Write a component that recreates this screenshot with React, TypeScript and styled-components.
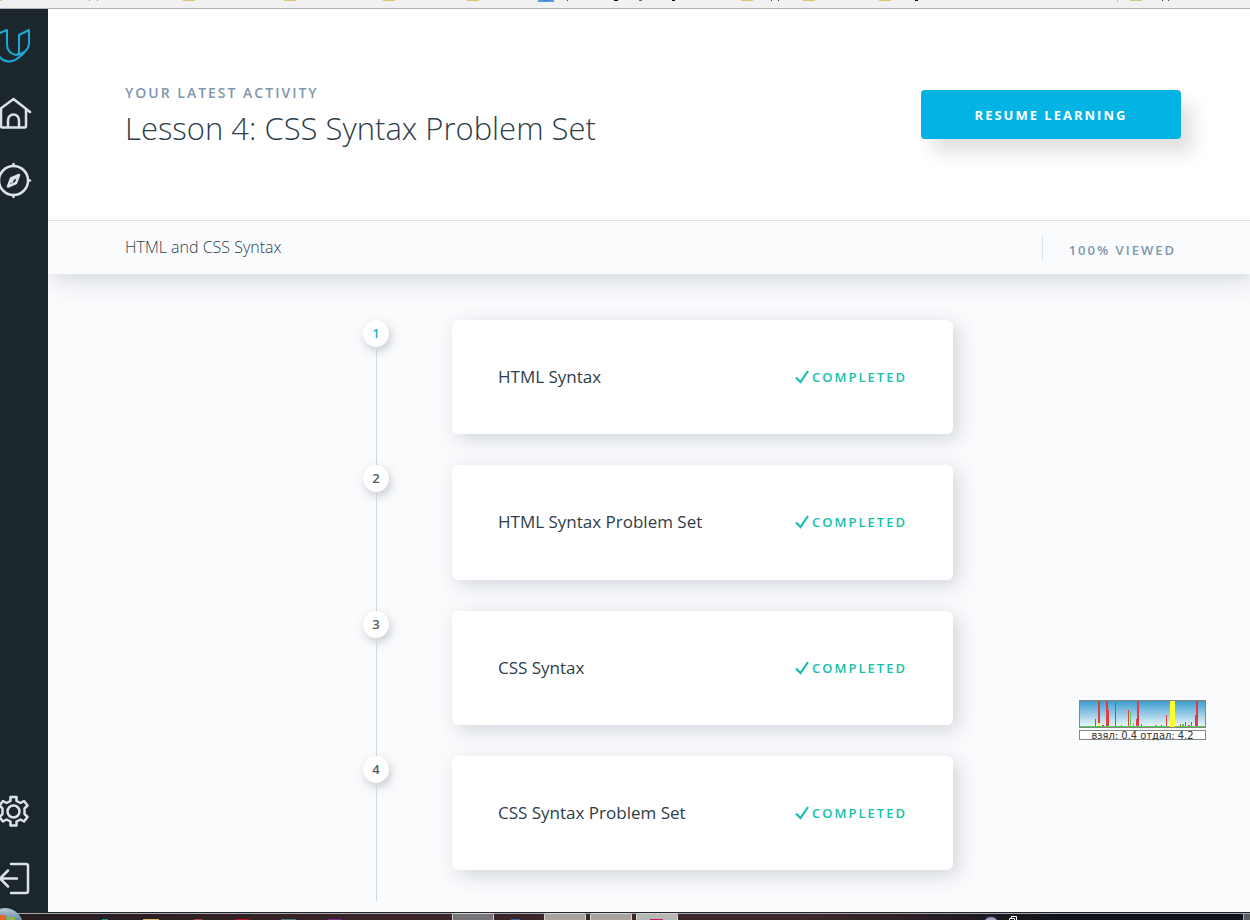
import React from "react";
import styled, { createGlobalStyle } from "styled-components";

const GlobalStyle = createGlobalStyle`
  *, *::before, *::after { box-sizing: border-box; }
  body {
    margin: 0;
    background: #fafbfd;
    color: #2e3d49;
    font-family: "Open Sans", "Noto Sans", sans-serif;
  }
  h1, h2, p, ol { margin: 0; padding: 0; }
`;

const Screen = styled.div`
  position: relative;
  display: flex;
  flex-direction: column;
  min-height: 100vh;
  overflow: hidden;
`;

const BookmarkBar = styled.div`
  height: 9px;
  overflow: hidden;
  background: #f1f1f1;
  border-bottom: 1px solid #b3b3b3;
  svg { display: block; }
`;

const Workspace = styled.div`
  display: flex;
  flex: 1;
`;

const Sidebar = styled.nav`
  position: relative;
  z-index: 1;
  display: flex;
  flex-direction: column;
  justify-content: space-between;
  flex: 0 0 48px;
  padding: 19px 0 15px;
  background: #1c262d;
`;

const NavGroup = styled.div`
  display: flex;
  flex-direction: column;
  gap: 31px;
`;

const NavLink = styled.a`
  display: block;
  height: 36px;
  color: #dbe2e8;
  svg { display: block; }
`;

const Main = styled.main`
  display: flex;
  flex-direction: column;
  flex: 1;
  min-width: 0;
`;

const Hero = styled.header`
  position: relative;
  z-index: 1;
  display: flex;
  align-items: flex-start;
  justify-content: space-between;
  height: 211px;
  padding: 73px 69px 0 77px;
  background: #fff;
`;

const Eyebrow = styled.p`
  color: #7d97ad;
  font-size: 14px;
  font-weight: 600;
  line-height: 22px;
  letter-spacing: 2px;
`;

const Title = styled.h1`
  font-size: 31px;
  font-weight: 300;
  line-height: 48px;
`;

const ResumeButton = styled.button`
  width: 260px;
  height: 49px;
  margin-top: 8px;
  border: 0;
  border-radius: 4px;
  background: #02b3e4;
  box-shadow: 12px 14px 18px rgba(0, 0, 0, 0.12);
  color: #fff;
  font: 700 13px/20px "Open Sans", sans-serif;
  letter-spacing: 2px;
`;

const SectionBar = styled.div`
  display: flex;
  align-items: center;
  justify-content: space-between;
  height: 54px;
  padding: 0 74px 0 77px;
  border-top: 1px solid #dbe0e6;
  background: #fafbfd;
  box-shadow: 5px 5px 25px rgba(46, 61, 73, 0.2);
`;

const SectionTitle = styled.h2`
  padding-bottom: 2px;
  font-size: 16px;
  font-weight: 300;
  line-height: 24px;
`;

const Viewed = styled.p`
  padding: 4px 0 0 26px;
  border-left: 1px solid #dbe2e8;
  color: #7d97ad;
  font-size: 13px;
  font-weight: 600;
  line-height: 22px;
  letter-spacing: 2px;
`;

const Timeline = styled.ol`
  display: grid;
  grid-auto-rows: 1fr;
  flex: 1;
  width: 100%;
  max-width: 608px;
  margin: 46px auto 11px;
  padding-left: 18px;
  list-style: none;
`;

const Step = styled.li`
  display: grid;
  grid-template-columns: 26px 1fr;
  column-gap: 63px;
`;

const Rail = styled.div`
  display: flex;
  flex-direction: column;
  align-items: center;
  &::after {
    content: "";
    flex: 1;
    width: 1px;
    background: #d3d8dc;
  }
`;

const StepNumber = styled.span<{ $active: boolean }>`
  width: 26px;
  height: 27px;
  border-radius: 50%;
  background: #fff;
  box-shadow: 2px 4px 10px rgba(46, 61, 73, 0.25);
  color: ${(p) => (p.$active ? "#2aaed3" : "#525c65")};
  font-size: 13px;
  font-weight: 600;
  line-height: 27px;
  text-align: center;
`;

const Card = styled.article`
  display: flex;
  align-items: center;
  justify-content: space-between;
  min-height: 80px;
  margin-bottom: 31px;
  padding: 0 46px;
  border-radius: 6px;
  background: #fff;
  box-shadow: 5px 5px 20px rgba(46, 61, 73, 0.2);
`;

const CardTitle = styled.h2`
  font-size: 17px;
  font-weight: 400;
  line-height: 24px;
`;

const Status = styled.p`
  display: flex;
  align-items: center;
  gap: 3px;
  color: #15c0ac;
  font-size: 13px;
  font-weight: 600;
  line-height: 20px;
  letter-spacing: 2px;
`;

const Monitor = styled.aside`
  position: absolute;
  top: 700px;
  right: 44px;
  width: 127px;
  svg { display: block; }
`;

const MonitorLabel = styled.p`
  height: 10px;
  margin-top: 2px;
  border: 1px solid #858585;
  background: #fff;
  color: #333;
  font: 11px/9px "DejaVu Sans Condensed", "DejaVu Sans", sans-serif;
  text-align: center;
  white-space: nowrap;
`;

const Taskbar = styled.footer`
  height: 8px;
  overflow: hidden;
  border-top: 1px solid #20242d;
  background: linear-gradient(#a5a5a9 0 1px, transparent 1px),
    linear-gradient(90deg, #241c20, #3b2529 30%, #3c282b 65%, #11131a 85%);
  svg { display: block; }
`;

const StartOrb = styled.button`
  position: absolute;
  z-index: 2;
  left: 0;
  bottom: 0;
  width: 24px;
  height: 12px;
  padding: 0;
  border: 0;
  background: none;
  svg { display: block; }
`;

const folders = [183, 284, 383, 467, 741, 803, 879, 1130];
const letterTails = [567, 771, 778, 1162, 1168];

const Bookmarks = () => (
  <svg width="1250" height="8" aria-hidden="true">
    {folders.map((x) => (
      <rect key={x} x={x} width="12" height="1" fill="#dcc66c" />
    ))}
    <rect width="2" height="1" fill="#dcc66c" />
    <rect x="538" width="16" height="2" fill="#5c98e2" />
    <rect x="543" width="7" height="1" fill="#3f84dc" />
    {letterTails.map((x) => (
      <rect key={x} x={x} width="1" height="1" fill="#444" />
    ))}
    <path d="M89 0h1v1h-1zM97 0h1v1h-1z" fill="#999" />
    <path d="M614 0h4v1h-4zM672 0h3v1h-3zM915 0h3v1h-3z" fill="#111" />
    <rect x="639" width="3" height="1" fill="#3583b0" />
    <rect x="1117" width="1" height="2" fill="#bbb" />
  </svg>
);

const iconProps = {
  width: 34,
  height: 36,
  fill: "none",
  stroke: "currentColor",
  strokeWidth: 2.5,
  strokeLinejoin: "round" as const,
  strokeLinecap: "round" as const,
  "aria-hidden": true,
};

const LogoIcon = () => (
  <svg {...iconProps} stroke="#1cabd9" strokeWidth="2">
    <path d="M-3 6L7 2v14c0 7 4 10 9 11 7-1 13-5 13-12V2l-10 5v17c0 2-1 3-3 3M-3 6v15c0 9 8 14 15 12 5-1 8-5 12-8" />
  </svg>
);

const HomeIcon = () => (
  <svg {...iconProps}>
    <path d="M-4 17L13.500 4 30 17M1 14v17a1.500 1.500 0 0 0 1.500 1.500h22A1.500 1.500 0 0 0 26 31V14M8 32V25a5.500 5.500 0 0 1 11 0v7" />
  </svg>
);

const CompassIcon = () => (
  <svg {...iconProps}>
    <circle cx="13.500" cy="18.500" r="14.500" />
    <path d="M13.500 4V2M13.500 33v2M28.500 18.500h1.500" />
    <path d="M19 13L16 21l-8 3.500 3-8z" />
    <path d="M17.500 14.500L13 17l-1.500 3" />
  </svg>
);

const GearIcon = () => (
  <svg {...iconProps}>
    <path d="M10.500 7V3h6V7l4 2 3.500-2 3.500 4.500-3 3v5.500l3 3-3.500 4.500-3.500-2-4 2v4h-6v-4l-4-2-3.500 2-3.500-4.500 3-3v-5.500l-3-3L3 7l3.500 2z" />
    <circle cx="13.500" cy="17.500" r="6" />
  </svg>
);

const ExitIcon = () => (
  <svg {...iconProps}>
    <path d="M11 3H26a2 2 0 0 1 2 2v25a2 2 0 0 1-2 2H11M17 17.500H0M8 9.500L0 17.500l8 8" />
  </svg>
);

const CheckIcon = () => (
  <svg width="14" height="14" viewBox="0 0 14 14" fill="none" stroke="currentColor" strokeWidth="2.200" aria-hidden="true">
    <path d="M1 7.500L5.500 12 13 1" />
  </svg>
);

const NetworkGraph = () => (
  <svg width="127" height="28" aria-hidden="true">
    <defs>
      <linearGradient id="graph-sky" x1="0" y1="0" x2="0" y2="1">
        <stop offset="0" stopColor="#3a9bce" />
        <stop offset="1" stopColor="#f4fafd" />
      </linearGradient>
    </defs>
    <rect x=".5" y=".5" width="126" height="27" fill="url(#graph-sky)" stroke="#858585" />
    <path
      d="M16 19h1v8h-1zM19 1h2v26h-2zM27 1h2v26h-2zM29 10h1v17h-1zM36 2h1v25h-1zM49 10h1v17h-1zM58 1h2v26h-2zM57 19h1v8h-1zM87 15h1v12h-1zM117 1h2v26h-2zM116 15h1v12h-1zM23 25h2v2h-2zM42 25h1v2h-1zM62 24h1v3h-1zM82 25h1v2h-1zM101 24h1v3h-1zM106 22h1v5h-1zM112 22h1v5h-1zM109 25h2v2h-2z"
      fill="#e13b42"
    />
    <path d="M1 26h125v1H1zM51 12h1v14h-1zM54 23h1v3h-1zM76 25h2v1h-2zM103 24h2v2h-2z" fill="#50cf50" />
    <path d="M91 1h5v26h-5zM19 23h2v3h-2z" fill="#ffff2d" />
  </svg>
);

const TaskbarItems = () => (
  <svg width="1250" height="7" aria-hidden="true">
    {[452, 544, 590, 636].map((x) => (
      <rect key={x} x={x + 0.5} y=".5" width="41" height="9" rx="1" fill={x === 636 ? "#b5b8b2" : x === 452 ? "#77747a" : "#a9a39f"} stroke="#d5d3d1" />
    ))}
    <path d="M102 6h6v1h-6z" fill="#209b83" />
    <path d="M143 6h16v1h-16z" fill="#d8bd6d" />
    <path d="M194 6h8v1h-8z" fill="#a94a3a" />
    <path d="M236 6h13v1h-13z" fill="#bd1020" />
    <path d="M281 6h15v1h-15z" fill="#517c80" />
    <path d="M328 6h13v1h-13z" fill="#7a27a2" />
    <path d="M511 6h9v1h-9z" fill="#2469a5" />
    <path d="M650 6h13v1h-13z" fill="#d31762" />
    <ellipse cx="991" cy="8" rx="6" ry="4" fill="#a0a2c2" stroke="#55566b" />
    <path d="M1011.500 5V3.500h5v4M1009.500 7V5.500h5V7" fill="none" stroke="#fff" />
    <path d="M1244 1h6v6h-6z" fill="#5b5d62" />
    <path d="M1243.500 1v6" stroke="#aaa" />
  </svg>
);

const steps = ["HTML Syntax", "HTML Syntax Problem Set", "CSS Syntax", "CSS Syntax Problem Set"];

export default function App() {
  return (
    <Screen>
      <GlobalStyle />
      <BookmarkBar>
        <Bookmarks />
      </BookmarkBar>
      <Workspace>
        <Sidebar>
          <NavGroup>
            <NavLink href="#" aria-label="Udacity"><LogoIcon /></NavLink>
            <NavLink href="#" aria-label="Home"><HomeIcon /></NavLink>
            <NavLink href="#" aria-label="Discover"><CompassIcon /></NavLink>
          </NavGroup>
          <NavGroup>
            <NavLink href="#" aria-label="Settings"><GearIcon /></NavLink>
            <NavLink href="#" aria-label="Sign out"><ExitIcon /></NavLink>
          </NavGroup>
        </Sidebar>
        <Main>
          <Hero>
            <div>
              <Eyebrow>YOUR LATEST ACTIVITY</Eyebrow>
              <Title>Lesson 4: CSS Syntax Problem Set</Title>
            </div>
            <ResumeButton type="button">RESUME LEARNING</ResumeButton>
          </Hero>
          <SectionBar>
            <SectionTitle>HTML and CSS Syntax</SectionTitle>
            <Viewed>100% VIEWED</Viewed>
          </SectionBar>
          <Timeline>
            {steps.map((title, i) => (
              <Step key={title}>
                <Rail>
                  <StepNumber $active={i === 0}>{i + 1}</StepNumber>
                </Rail>
                <Card>
                  <CardTitle>{title}</CardTitle>
                  <Status>
                    <CheckIcon />
                    COMPLETED
                  </Status>
                </Card>
              </Step>
            ))}
          </Timeline>
        </Main>
      </Workspace>
      <Monitor>
        <NetworkGraph />
        <MonitorLabel>взял: 0.4 отдал: 4.2</MonitorLabel>
      </Monitor>
      <Taskbar>
        <TaskbarItems />
      </Taskbar>
      <StartOrb type="button" aria-label="Start">
        <svg width="24" height="12" aria-hidden="true">
          <defs>
            <linearGradient id="orb" x1="0" y1="0" x2="0" y2="1">
              <stop offset="0" stopColor="#b9cad7" />
              <stop offset=".4" stopColor="#527f9f" />
            </linearGradient>
          </defs>
          <circle cx="5" cy="18" r="17.500" fill="url(#orb)" stroke="#9fb4c4" />
          <path d="M0 7q3-1 6 1v4H0z" fill="#e5672c" />
          <path d="M7 8q4 2 8 1v3H7z" fill="#8cbb42" />
        </svg>
      </StartOrb>
    </Screen>
  );
}
